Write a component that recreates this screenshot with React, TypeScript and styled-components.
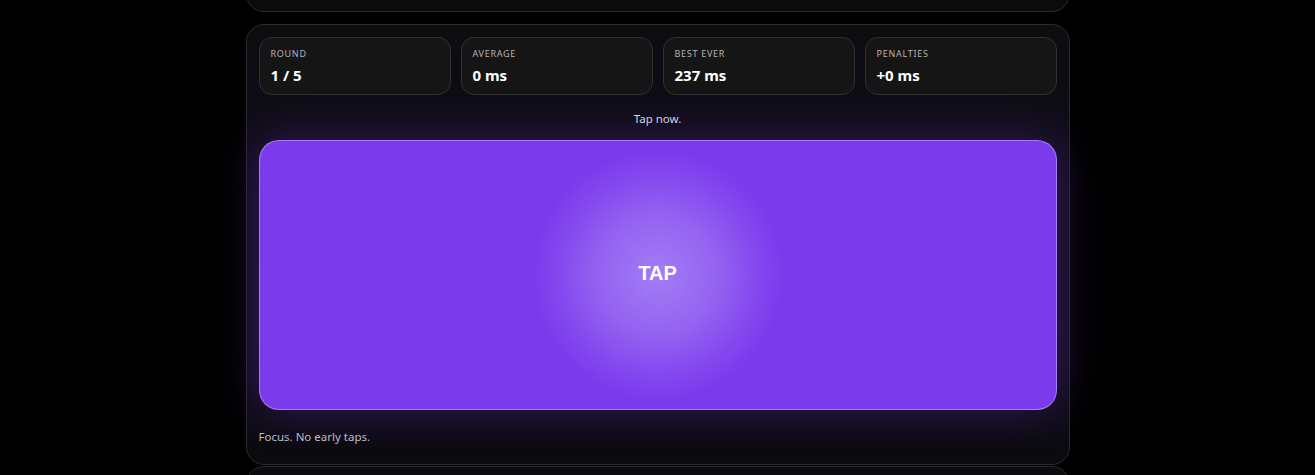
import React from "react";
import styled, { createGlobalStyle } from "styled-components";

const GlobalStyle = createGlobalStyle`
  html, body {
    margin: 0;
    padding: 0;
    background: #000;
    overflow: hidden;
  }
  body {
    font-family: "Noto Sans", "Open Sans", Arial, sans-serif;
    color: #fff;
  }
`;

const Page = styled.div`
  height: 475px;
  overflow: hidden;
  background: #000;
`;

const Column = styled.div`
  width: 824px;
  margin: -100px auto 0;
  display: flex;
  flex-direction: column;
`;

const Card = styled.div<{ $height?: number; $gapAfter?: number }>`
  box-sizing: border-box;
  background: #0b0b0d;
  border: 1px solid #2b2b2f;
  border-radius: 18px;
  margin-bottom: ${(p) => p.$gapAfter ?? 0}px;
  ${(p) => (p.$height ? `height: ${p.$height}px;` : "")}
`;

const Game = styled(Card)`
  padding: 12px 12px 18px;
  display: flex;
  flex-direction: column;
  background: linear-gradient(180deg, #0d0d10 0%, #100c18 30%, #120d1c 70%, #0b0a0e 100%);
`;

const Stats = styled.div`
  display: grid;
  grid-template-columns: repeat(4, 1fr);
  gap: 10px;
`;

const Stat = styled.div`
  box-sizing: border-box;
  height: 58px;
  padding: 10px 11px 0;
  background: #151516;
  border: 1px solid #313134;
  border-radius: 13px;
  display: flex;
  flex-direction: column;
  gap: 6px;
`;

const StatLabel = styled.div`
  font-size: 9px;
  line-height: 12px;
  letter-spacing: 0.08em;
  text-transform: uppercase;
  color: #b4b4b8;
`;

const StatValue = styled.div`
  font-size: 15px;
  line-height: 18px;
  font-weight: 700;
  color: #fff;
`;

const Hint = styled.div`
  margin-top: 16px;
  font-size: 11.5px;
  line-height: 16px;
  text-align: center;
  color: #dcdce0;
`;

const TapArea = styled.button`
  margin-top: 13px;
  height: 270px;
  padding: 0 0 3px;
  border-radius: 20px;
  border: 1px solid rgba(190, 160, 255, 0.65);
  background: radial-gradient(circle at 50% 50%, #a27df4 0px, #9462f1 60px, #8448ee 100px, #7c3aed 125px);
  box-shadow: 0 0 46px rgba(124, 58, 237, 0.32);
  color: #fff;
  font-family: "Liberation Sans", Arial, sans-serif;
  font-size: 20px;
  font-weight: 700;
  cursor: pointer;
  display: flex;
  align-items: center;
  justify-content: center;
`;

const Footer = styled.div`
  margin-top: 19px;
  font-size: 11.5px;
  line-height: 16px;
  color: #bdbdc2;
`;

const stats = [
  { label: "Round", value: "1 / 5" },
  { label: "Average", value: "0 ms" },
  { label: "Best ever", value: "237 ms" },
  { label: "Penalties", value: "+0 ms" },
];

export default function App() {
  return (
    <Page>
      <GlobalStyle />
      <Column>
        <Card $height={112} $gapAfter={12} />
        <Game $height={441} $gapAfter={1}>
          <Stats>
            {stats.map((s) => (
              <Stat key={s.label}>
                <StatLabel>{s.label}</StatLabel>
                <StatValue>{s.value}</StatValue>
              </Stat>
            ))}
          </Stats>
          <Hint>Tap now.</Hint>
          <TapArea>TAP</TapArea>
          <Footer>Focus. No early taps.</Footer>
        </Game>
        <Card $height={120} />
      </Column>
    </Page>
  );
}
